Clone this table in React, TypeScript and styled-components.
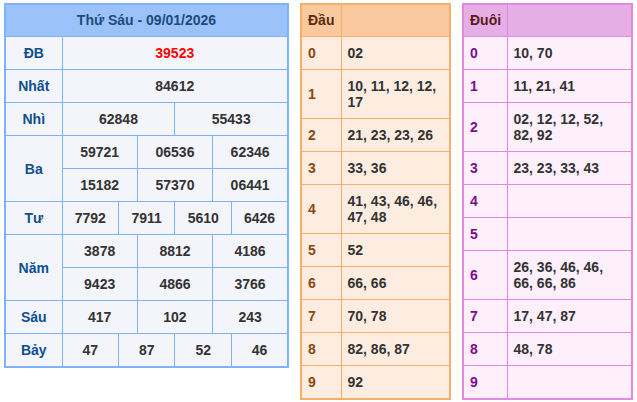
import styled, { createGlobalStyle } from 'styled-components';

const GlobalStyle = createGlobalStyle`
  body {
    margin: 0;
    background: #ffffff;
    font-family: 'Liberation Sans', Arial, sans-serif;
  }
`;

type Prize = { label: string; rows: string[][]; special?: boolean };

const prizes: Prize[] = [
  { label: 'ĐB', rows: [['39523']], special: true },
  { label: 'Nhất', rows: [['84612']] },
  { label: 'Nhì', rows: [['62848', '55433']] },
  {
    label: 'Ba',
    rows: [
      ['59721', '06536', '62346'],
      ['15182', '57370', '06441'],
    ],
  },
  { label: 'Tư', rows: [['7792', '7911', '5610', '6426']] },
  {
    label: 'Năm',
    rows: [
      ['3878', '8812', '4186'],
      ['9423', '4866', '3766'],
    ],
  },
  { label: 'Sáu', rows: [['417', '102', '243']] },
  { label: 'Bảy', rows: [['47', '87', '52', '46']] },
];

const dau = ['02', '10, 11, 12, 12, 17', '21, 23, 23, 26', '33, 36', '41, 43, 46, 46, 47, 48', '52', '66, 66', '70, 78', '82, 86, 87', '92'];
const duoi = ['10, 70', '11, 21, 41', '02, 12, 12, 52, 82, 92', '23, 23, 33, 43', '', '', '26, 36, 46, 46, 66, 66, 86', '17, 47, 87', '48, 78', ''];

type Tone = {
  border: string;
  head: string;
  headText: string;
  cell: string;
  label: string;
};

const orange: Tone = {
  border: '#f9ae68',
  head: '#fac99d',
  headText: '#5a2d0c',
  cell: '#fdede1',
  label: '#8a4b0b',
};

const pink: Tone = {
  border: '#e387e0',
  head: '#e5aee5',
  headText: '#5c1a1a',
  cell: '#fdf0fb',
  label: '#7d0c8c',
};

export default function App() {
  return (
    <>
      <GlobalStyle />
      <Page>
        <ResultTable>
          <colgroup>
            <col style={{ width: 57 }} />
            {Array.from({ length: 12 }).map((_, i) => (
              <col key={i} />
            ))}
          </colgroup>
          <thead>
            <tr>
              <DateHead colSpan={13}>Thứ Sáu - 09/01/2026</DateHead>
            </tr>
          </thead>
          <tbody>
            {prizes.map((prize) =>
              prize.rows.map((row, ri) => (
                <tr key={prize.label + ri}>
                  {ri === 0 && <PrizeLabel rowSpan={prize.rows.length}>{prize.label}</PrizeLabel>}
                  {row.map((num, ni) => (
                    <Number key={ni} colSpan={12 / row.length} $special={prize.special}>
                      {num}
                    </Number>
                  ))}
                </tr>
              ))
            )}
          </tbody>
        </ResultTable>

        <LotoTable $tone={orange} $width={151}>
          <colgroup>
            <col style={{ width: 40 }} />
            <col />
          </colgroup>
          <thead>
            <tr>
              <LotoHead $tone={orange}>Đầu</LotoHead>
              <LotoHead $tone={orange} />
            </tr>
          </thead>
          <tbody>
            {dau.map((v, i) => (
              <tr key={i}>
                <LotoKey $tone={orange}>{i}</LotoKey>
                <LotoValue $tone={orange}>{v}</LotoValue>
              </tr>
            ))}
          </tbody>
        </LotoTable>

        <LotoTable $tone={pink} $width={171}>
          <colgroup>
            <col style={{ width: 44 }} />
            <col />
          </colgroup>
          <thead>
            <tr>
              <LotoHead $tone={pink}>Đuôi</LotoHead>
              <LotoHead $tone={pink} />
            </tr>
          </thead>
          <tbody>
            {duoi.map((v, i) => (
              <tr key={i}>
                <LotoKey $tone={pink}>{i}</LotoKey>
                <LotoValue $tone={pink}>{v}</LotoValue>
              </tr>
            ))}
          </tbody>
        </LotoTable>
      </Page>
    </>
  );
}

const Page = styled.div`
  display: flex;
  align-items: flex-start;
  gap: 11px;
  padding: 3px 4px;
`;

const ResultTable = styled.table`
  width: 285px;
  table-layout: fixed;
  border-collapse: collapse;
  border: 2px solid #7eb2fc;
  font-size: 14px;
  line-height: 16px;
  font-weight: bold;

  td,
  th {
    border: 1px solid #7eb2fc;
    padding: 8px 2px;
    text-align: center;
    background: #f3f5fa;
  }
`;

const DateHead = styled.th`
  && {
    background: #9bc3fa;
    color: #1b4d7a;
    padding-top: 7px;
  }
`;

const PrizeLabel = styled.td`
  color: #0e4f8f;
`;

const Number = styled.td<{ $special?: boolean }>`
  color: ${(p) => (p.$special ? '#ff0000' : '#333333')};
`;

const LotoTable = styled.table<{ $tone: Tone; $width: number }>`
  width: ${(p) => p.$width}px;
  flex-shrink: 0;
  table-layout: fixed;
  border-collapse: collapse;
  border: 2px solid ${(p) => p.$tone.border};
  font-size: 14px;
  line-height: 16px;
  font-weight: bold;
`;

const LotoHead = styled.th<{ $tone: Tone }>`
  border: 1px solid ${(p) => p.$tone.border};
  background: ${(p) => p.$tone.head};
  color: ${(p) => p.$tone.headText};
  padding: 7px 6px 8px;
  text-align: left;
`;

const LotoKey = styled.td<{ $tone: Tone }>`
  border: 1px solid ${(p) => p.$tone.border};
  background: ${(p) => p.$tone.cell};
  color: ${(p) => p.$tone.label};
  padding: 8px 6px;
`;

const LotoValue = styled.td<{ $tone: Tone }>`
  border: 1px solid ${(p) => p.$tone.border};
  background: ${(p) => p.$tone.cell};
  color: #333333;
  padding: 8px 6px;
`;
